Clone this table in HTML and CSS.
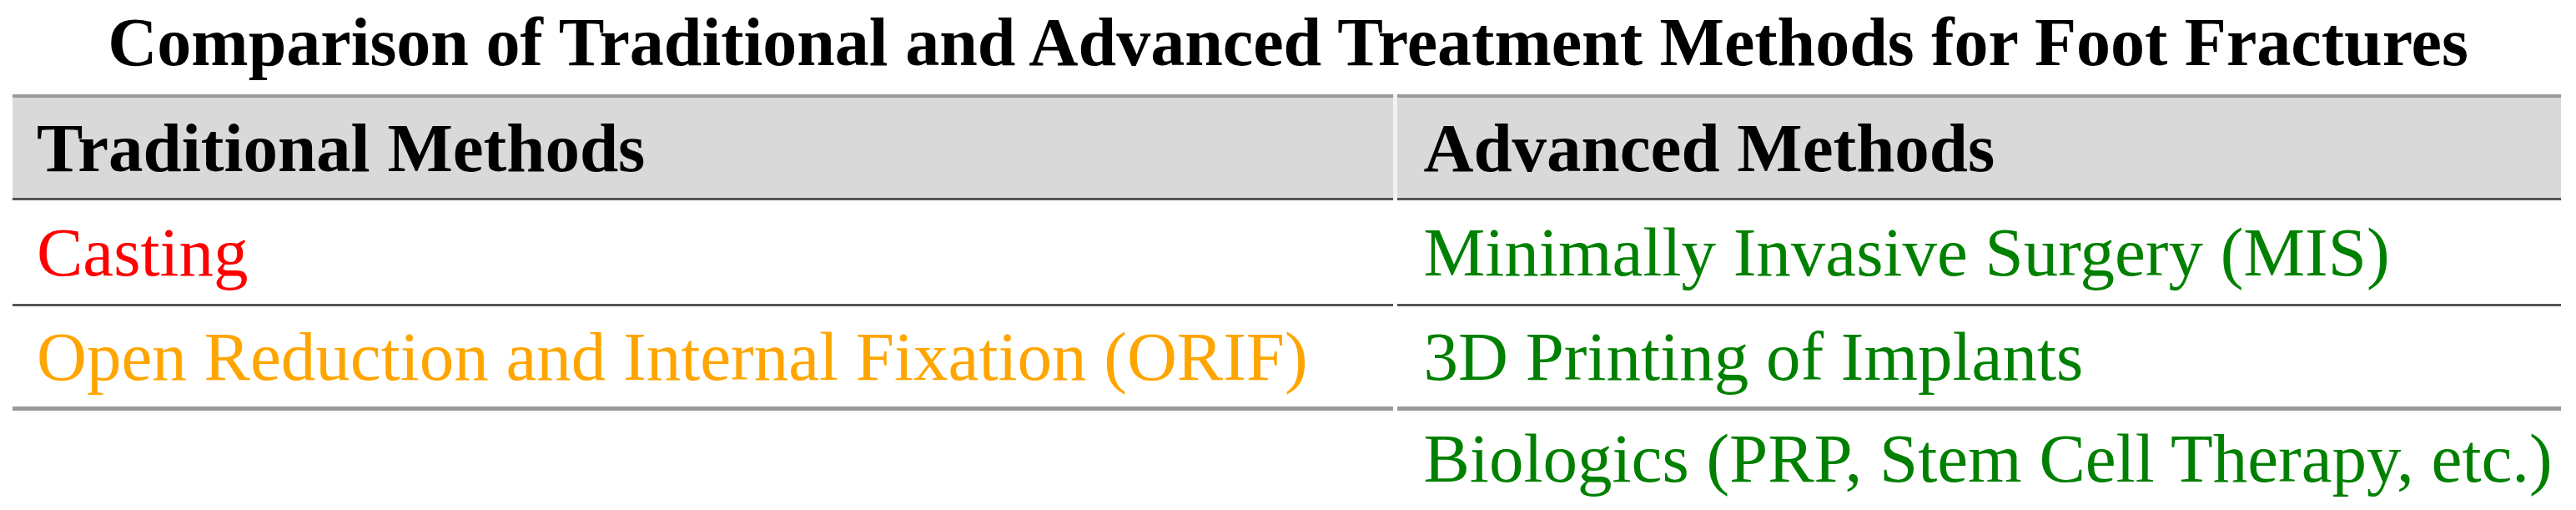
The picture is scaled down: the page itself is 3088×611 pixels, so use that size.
FILE: index.html
```html
<!DOCTYPE html>
<html lang="en">
<head>
<meta charset="utf-8">
<title>Comparison of Traditional and Advanced Treatment Methods for Foot Fractures</title>
<link rel="stylesheet" href="styles.css">
</head>
<body>
<div class="page">
  <h1 class="title">Comparison of Traditional and Advanced Treatment Methods for Foot Fractures</h1>
  <table class="compare">
    <thead>
      <tr>
        <th class="col-a">Traditional Methods</th>
        <th class="col-b">Advanced Methods</th>
      </tr>
    </thead>
    <tbody>
      <tr class="row-1">
        <td class="col-a red">Casting</td>
        <td class="col-b green">Minimally Invasive Surgery (MIS)</td>
      </tr>
      <tr class="row-2">
        <td class="col-a orange">Open Reduction and Internal Fixation (ORIF)</td>
        <td class="col-b green">3D Printing of Implants</td>
      </tr>
      <tr class="row-3">
        <td class="col-a"></td>
        <td class="col-b green">Biologics (PRP, Stem Cell Therapy, etc.)</td>
      </tr>
    </tbody>
  </table>
</div>
</body>
</html>
```

FILE: styles.css
```css
html, body {
  margin: 0;
  padding: 0;
  background: #ffffff;
}

.page {
  width: 3088px;
  height: 611px;
  overflow: hidden;
  font-family: "Liberation Serif", "Times New Roman", serif;
  color: #000;
}

.title {
  margin: 0;
  height: 113px;
  box-sizing: border-box;
  padding-top: 6px;
  font-size: 82px;
  line-height: 90px;
  font-weight: bold;
  text-align: center;
}

.compare {
  margin-left: 15px;
  width: 3055px;
  border-collapse: collapse;
  table-layout: fixed;
  font-size: 83px;
}

.compare th,
.compare td {
  padding: 0;
  text-align: left;
  vertical-align: middle;
  white-space: nowrap;
  box-sizing: border-box;
}

.compare .col-a {
  width: 1657px;
  padding-left: 29px;
}

.compare .col-b {
  padding-left: 32px;
}

.compare thead tr {
  background: #d9d9d9;
  border-top: 4px solid #999999;
  border-bottom: 3px solid #555555;
}

.compare th {
  height: 123px;
  font-weight: bold;
}

.compare th.col-b {
  border-left: 5px solid #f2f2f2;
}

.compare td.col-b {
  border-left: 5px solid transparent;
}

.row-1 td { height: 127px; }
.row-2 td { height: 124px; }
.row-3 td { height: 118px; }

.row-1 { border-bottom: 3px solid #555555; }
.row-2 { border-bottom: 5px solid #9a9a9a; }

.red { color: #ff0000; }
.orange { color: #ffa500; }
.green { color: #008000; }
```
